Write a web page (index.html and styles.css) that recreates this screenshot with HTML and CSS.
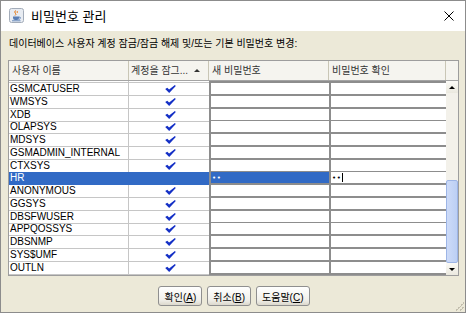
FILE: index.html
```html
<!DOCTYPE html>
<html lang="ko">
<head>
  <meta charset="UTF-8">
  <title>비밀번호 관리</title>
  <link rel="stylesheet" href="styles.css">
</head>
<body>
  <svg width="0" height="0" class="defs">
    <symbol id="check" viewBox="0 0 11 8">
      <path d="M0.2 4.1 L2.3 2.8 L4.1 4.6 L9.9 0.1 L10.8 1 L4.2 7.9 Z" fill="#1430c6"/>
    </symbol>
  </svg>

  <div class="window">
    <div class="titlebar">
      <svg class="app-icon" width="15" height="15" viewBox="0 0 15 15">
        <rect x="0.5" y="0.5" width="14" height="14" rx="2" fill="#e8ecf2" stroke="#a3acb9"/>
        <path d="M6.5 2.5 q-1.5 1.5 0 3 q1 1 -0.5 2" stroke="#e76f00" stroke-width="1" fill="none"/>
        <path d="M8.5 3 q-1 1 0 2" stroke="#e76f00" stroke-width="0.8" fill="none"/>
        <path d="M4 8.5 h6 v1.5 q0 2 -2 2 h-2 q-2 0 -2 -2 z" fill="#5a7fb5"/>
        <path d="M10 9 q2 0 1.2 1.6 q-0.5 0.8 -1.6 0.9" stroke="#5a7fb5" stroke-width="0.9" fill="none"/>
        <path d="M3 12.8 h8.5" stroke="#5a7fb5" stroke-width="0.9"/>
      </svg>
      <span class="title">비밀번호 관리</span>
      <svg class="close" width="10" height="10" viewBox="0 0 10 10">
        <path d="M0.5 0.5 L9.5 9.5 M9.5 0.5 L0.5 9.5" stroke="#000" stroke-width="1"/>
      </svg>
    </div>

    <div class="content">
      <p class="intro">데이터베이스 사용자 계정 잠금/잠금 해제 및/또는 기본 비밀번호 변경:</p>

      <div class="grid">
        <div class="grid-head">
          <div class="hcell">사용자 이름</div>
          <div class="hcell sorted"><span>계정을 잠그...</span><span class="sort-arrow"></span></div>
          <div class="hcell">새 비밀번호</div>
          <div class="hcell">비밀번호 확인</div>
          <div class="hcorner"></div>
        </div>

        <div class="grid-body">
          <div class="viewport">
            <div class="rows">
              <div class="row"><div class="name"></div><div class="lock"><svg class="chk"><use href="#check"/></svg></div><div class="pw"></div><div class="pw"></div></div>
              <div class="row"><div class="name">GSMCATUSER</div><div class="lock"><svg class="chk"><use href="#check"/></svg></div><div class="pw"></div><div class="pw"></div></div>
              <div class="row"><div class="name">WMSYS</div><div class="lock"><svg class="chk"><use href="#check"/></svg></div><div class="pw"></div><div class="pw"></div></div>
              <div class="row"><div class="name">XDB</div><div class="lock"><svg class="chk"><use href="#check"/></svg></div><div class="pw"></div><div class="pw"></div></div>
              <div class="row"><div class="name">OLAPSYS</div><div class="lock"><svg class="chk"><use href="#check"/></svg></div><div class="pw"></div><div class="pw"></div></div>
              <div class="row"><div class="name">MDSYS</div><div class="lock"><svg class="chk"><use href="#check"/></svg></div><div class="pw"></div><div class="pw"></div></div>
              <div class="row"><div class="name">GSMADMIN_INTERNAL</div><div class="lock"><svg class="chk"><use href="#check"/></svg></div><div class="pw"></div><div class="pw"></div></div>
              <div class="row"><div class="name">CTXSYS</div><div class="lock"><svg class="chk"><use href="#check"/></svg></div><div class="pw"></div><div class="pw"></div></div>
              <div class="row selected"><div class="name">HR</div><div class="lock"></div><div class="pw"><span class="dots">••</span></div><div class="pw editing"><span class="dots">••</span><span class="caret"></span></div></div>
              <div class="row"><div class="name">ANONYMOUS</div><div class="lock"><svg class="chk"><use href="#check"/></svg></div><div class="pw"></div><div class="pw"></div></div>
              <div class="row"><div class="name">GGSYS</div><div class="lock"><svg class="chk"><use href="#check"/></svg></div><div class="pw"></div><div class="pw"></div></div>
              <div class="row"><div class="name">DBSFWUSER</div><div class="lock"><svg class="chk"><use href="#check"/></svg></div><div class="pw"></div><div class="pw"></div></div>
              <div class="row"><div class="name">APPQOSSYS</div><div class="lock"><svg class="chk"><use href="#check"/></svg></div><div class="pw"></div><div class="pw"></div></div>
              <div class="row"><div class="name">DBSNMP</div><div class="lock"><svg class="chk"><use href="#check"/></svg></div><div class="pw"></div><div class="pw"></div></div>
              <div class="row"><div class="name">SYS$UMF</div><div class="lock"><svg class="chk"><use href="#check"/></svg></div><div class="pw"></div><div class="pw"></div></div>
              <div class="row"><div class="name">OUTLN</div><div class="lock"><svg class="chk"><use href="#check"/></svg></div><div class="pw"></div><div class="pw"></div></div>
            </div>
          </div>

          <div class="vscroll">
            <div class="sb-btn"><span class="arrow-up"></span></div>
            <div class="sb-track"></div>
            <div class="sb-thumb"><span class="grip"></span></div>
            <div class="sb-btn"><span class="arrow-down"></span></div>
          </div>
        </div>
      </div>

      <div class="buttons">
        <button class="btn">확인(<u>A</u>)</button>
        <button class="btn">취소(<u>B</u>)</button>
        <button class="btn">도움말(<u>C</u>)</button>
      </div>
    </div>

    <span class="resize-grip"></span>
  </div>
</body>
</html>
```

FILE: styles.css
```css
body {
  margin: 0;
  background: #fff;
  font-family: "Liberation Sans", "Noto Sans CJK KR", sans-serif;
  color: #000;
}

.defs {
  position: absolute;
}

.window {
  position: relative;
  width: 466px;
  height: 313px;
  box-sizing: border-box;
  border: 1px solid #8c8c8c;
  background: #ece9d8;
  display: flex;
  flex-direction: column;
}

/* title bar */
.titlebar {
  height: 30px;
  flex: none;
  background: #fff;
  display: flex;
  align-items: center;
  padding: 0 11px 0 8px;
}

.app-icon {
  flex: none;
  margin-top: -1px;
}

.title {
  margin-left: 7px;
  font-size: 13px;
  flex: 1;
  margin-top: -2px;
}

.close {
  flex: none;
}

/* content */
.content {
  flex: 1;
  padding: 6px 6px 0 7px;
  display: flex;
  flex-direction: column;
}

.intro {
  margin: 0 0 9px 1px;
  font-size: 10px;
  line-height: 14px;
  white-space: nowrap;
}

.grid {
  border: 1px solid #9d9d9d;
  background: #fff;
}

.grid-head {
  display: grid;
  grid-template-columns: 120px 80px 120px 117px 12px;
  height: 20px;
  box-sizing: border-box;
  border-bottom: 1px solid #a4a4a4;
  background: #f5f4ef;
}

.hcell {
  box-sizing: border-box;
  border-right: 1px solid #c9c6b6;
  padding-left: 3px;
  font-size: 10px;
  line-height: 19px;
  color: #333;
  white-space: nowrap;
}

.hcell.sorted {
  display: flex;
  align-items: center;
  padding-left: 2px;
  gap: 6px;
}

.sort-arrow {
  width: 0;
  height: 0;
  border-left: 3px solid transparent;
  border-right: 3px solid transparent;
  border-bottom: 3px solid #333;
}

.hcorner {
  background: #f5f4ef;
}

/* rows */
.grid-body {
  display: flex;
  height: 194px;
}

.viewport {
  width: 437px;
  overflow: hidden;
}

.rows {
  margin-top: -10.75px;
}

.row {
  display: grid;
  grid-template-columns: 120px 80px 120px 117px;
  height: 12.75px;
}

.row > div {
  box-sizing: border-box;
}

.name {
  padding-left: 1px;
  font-size: 10px;
  line-height: 12px;
  border-bottom: 1px solid #c6c6c6;
  border-right: 1px solid #c6c6c6;
  white-space: nowrap;
}

.lock {
  border-bottom: 1px solid #c6c6c6;
  display: flex;
  justify-content: center;
  align-items: center;
  padding-left: 3px;
}

.chk {
  width: 11px;
  height: 8px;
}

.pw {
  background: #fff;
  border-left: 2px solid #8d8d8d;
  border-bottom: 2px solid #8d8d8d;
  display: flex;
  align-items: center;
  padding-left: 1px;
}

.row.selected .name,
.row.selected .lock,
.row.selected .pw:nth-child(3) {
  background: #316ac5;
  color: #fff;
}

.row.selected .name,
.row.selected .lock {
  border-color: #316ac5;
}

.dots {
  font-family: "DejaVu Sans", sans-serif;
  font-size: 7px;
  letter-spacing: 0.5px;
  line-height: 10px;
}

.caret {
  width: 1px;
  height: 9px;
  background: #000;
  margin-left: 1px;
}

/* scrollbar */
.vscroll {
  width: 12px;
  display: flex;
  flex-direction: column;
  background: #f3f1ea;
}

.sb-btn {
  height: 12px;
  flex: none;
  display: flex;
  align-items: center;
  justify-content: center;
  background: linear-gradient(#fbfaf6, #ebe9df);
}

.arrow-up,
.arrow-down {
  width: 0;
  height: 0;
  border-left: 3px solid transparent;
  border-right: 3px solid transparent;
}

.arrow-up {
  border-bottom: 3px solid #000;
}

.arrow-down {
  border-top: 3px solid #000;
}

.sb-track {
  height: 87px;
  flex: none;
}

.sb-thumb {
  height: 83px;
  flex: none;
  box-sizing: border-box;
  border: 1px solid #9db5e6;
  border-radius: 2px;
  background: linear-gradient(90deg, #cddbf8, #bccff4);
  display: flex;
  align-items: center;
  justify-content: center;
}

.grip {
  width: 7px;
  height: 16px;
  background-image: radial-gradient(#a4b9e6 40%, transparent 45%);
  background-size: 2px 2px;
}

/* buttons */
.buttons {
  display: flex;
  justify-content: center;
  gap: 5px;
  margin-top: 10px;
  padding-left: 1px;
}

.btn {
  height: 20px;
  padding: 0 5px;
  font-family: "Liberation Sans", "Noto Sans CJK KR", sans-serif;
  font-size: 10px;
  color: #000;
  border: 1px solid #8f8f8f;
  border-radius: 3px;
  background: linear-gradient(#ffffff, #f1f0eb 70%, #dcd8cd);
}

.btn u {
  text-decoration-thickness: 1px;
}

.resize-grip {
  position: absolute;
  right: 1px;
  bottom: 1px;
  width: 10px;
  height: 10px;
  background: linear-gradient(135deg, transparent 55%, #c3bfae 55%, #c3bfae 62%, transparent 62%, transparent 75%, #c3bfae 75%, #c3bfae 82%, transparent 82%);
}
```
